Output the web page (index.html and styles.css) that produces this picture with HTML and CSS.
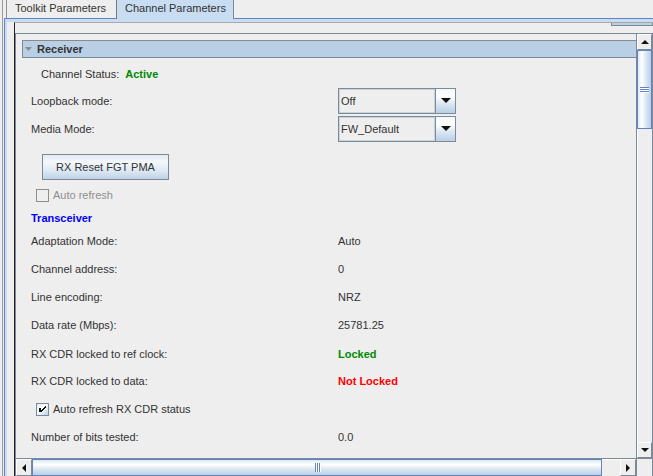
FILE: index.html
```html
<!DOCTYPE html>
<html>
<head>
<meta charset="utf-8">
<link rel="stylesheet" href="styles.css">
</head>
<body>
<div class="frame">
  <div class="tabs">
    <div class="tab">Toolkit Parameters</div>
    <div class="tab sel">Channel Parameters</div>
  </div>
  <div class="pane">
    <div class="pane-in">
      <div class="panel">
        <div class="strip"><span class="nub"></span></div>
        <div class="scroll">
          <div class="viewport">
            <div class="hdr">
              <svg class="tri" width="7" height="4" viewBox="0 0 7 4"><polygon points="0,0 7,0 3.5,4" fill="#8a8a8a"/></svg>
              <span>Receiver</span>
            </div>
            <div class="rows">
              <div class="status"><span>Channel Status:</span><b class="green">Active</b></div>
              <div class="crow first">
                <span>Loopback mode:</span>
                <div class="combo">
                  <div class="field">Off</div>
                  <div class="cbtn"><svg width="10" height="6" viewBox="0 0 10 6"><polygon points="0,0 10,0 5,5" fill="#111"/></svg></div>
                </div>
              </div>
              <div class="crow">
                <span>Media Mode:</span>
                <div class="combo">
                  <div class="field">FW_Default</div>
                  <div class="cbtn"><svg width="10" height="6" viewBox="0 0 10 6"><polygon points="0,0 10,0 5,5" fill="#111"/></svg></div>
                </div>
              </div>
              <div class="btnrow"><div class="btn">RX Reset FGT PMA</div></div>
              <div class="chkrow disabled"><span class="box"></span><span>Auto refresh</span></div>
              <div class="section">Transceiver</div>
              <div class="kv"><span>Adaptation Mode:</span><span>Auto</span></div>
              <div class="kv"><span>Channel address:</span><span>0</span></div>
              <div class="kv"><span>Line encoding:</span><span>NRZ</span></div>
              <div class="kv"><span>Data rate (Mbps):</span><span>25781.25</span></div>
              <div class="kv lower"><span>RX CDR locked to ref clock:</span><b class="green">Locked</b></div>
              <div class="kv"><span>RX CDR locked to data:</span><b class="red">Not Locked</b></div>
              <div class="kv chk"><span class="chkrow"><span class="box on"><svg width="11" height="11" viewBox="0 0 11 11" shape-rendering="crispEdges"><rect x="2" y="4" width="2" height="4" fill="#111"/><polygon points="4,6 8,2 9,2 9,3 5,7 5,8 4,8" fill="#111"/></svg></span><span>Auto refresh RX CDR status</span></span></div>
              <div class="kv"><span>Number of bits tested:</span><span>0.0</span></div>
            </div>
          </div>
          <div class="vbar">
            <div class="sbtn"><svg width="8" height="5" viewBox="0 0 8 5"><polygon points="4,0 8,4 0,4" fill="#111"/></svg></div>
            <div class="vthumb"><span class="grip"></span><span class="grip"></span><span class="grip"></span></div>
            <div class="vtrack"></div>
            <div class="sbtn"><svg width="8" height="5" viewBox="0 0 8 5"><polygon points="0,0 8,0 4,4" fill="#111"/></svg></div>
          </div>
          <div class="hbar">
            <div class="sbtn"><svg width="5" height="8" viewBox="0 0 5 8"><polygon points="0,4 4,0 4,8" fill="#111"/></svg></div>
            <div class="hthumb"><span class="vgrip"></span><span class="vgrip"></span><span class="vgrip"></span></div>
            <div class="htrack"></div>
            <div class="sbtn"><svg width="5" height="8" viewBox="0 0 5 8"><polygon points="0,0 4,4 0,8" fill="#111"/></svg></div>
          </div>
          <div class="corner"></div>
        </div>
      </div>
    </div>
  </div>
</div>
</body>
</html>
```
FILE: styles.css
```css
html, body {
  margin: 0;
  padding: 0;
  background: #eeeeee;
}
body {
  width: 653px;
  height: 476px;
  overflow: hidden;
  font-family: "Liberation Sans", Arial, sans-serif;
  font-size: 11px;
  color: #333333;
}
.frame {
  margin-left: 2px;
  border-left: 1px solid #9a9a9a;
  padding-left: 1px;
  height: 476px;
  display: flex;
  flex-direction: column;
}
.tabs {
  display: flex;
  height: 18px;
  padding-left: 2px;
  position: relative;
  z-index: 1;
}
.tab {
  box-sizing: border-box;
  width: 111px;
  height: 18px;
  border-left: 1px solid #8e8f8f;
  border-right: 1px solid #8e8f8f;
  padding-left: 8px;
  line-height: 17px;
  white-space: nowrap;
}
.tab.sel {
  width: 118px;
  height: 19px;
  margin-left: -1px;
  background: #c8ddf2;
  border-left-color: #6f7a86;
  border-right-color: #7a8a99;
}
.pane {
  flex: 1;
  min-height: 0;
  display: flex;
  flex-direction: column;
  border-top: 1px solid #6382bf;
  border-left: 1px solid #6382bf;
  background: #c8ddf2;
  padding: 3px 0 0 2px;
}
.pane-in {
  flex: 1;
  min-height: 0;
  background: #eeeeee;
  padding-left: 7px;
  display: flex;
  flex-direction: column;
}
.panel {
  flex: 1;
  min-height: 0;
  border-left: 1px solid #222222;
  border-top: 1px solid #a9a9a9;
  display: flex;
  flex-direction: column;
}
.strip {
  height: 10px;
  display: flex;
  justify-content: flex-end;
}
.nub {
  width: 40px;
  height: 2px;
  border: 1px solid #7a8a99;
  border-top: none;
  background: #b8cfe5;
}
.scroll {
  flex: 1;
  min-height: 0;
  display: grid;
  grid-template-columns: 1fr 16px;
  grid-template-rows: 1fr 18px;
  border-top: 1px solid #7a8a99;
  border-left: 1px solid #7a8a99;
  border-right: 1px solid #7a8a99;
}
.viewport {
  overflow: hidden;
  padding-top: 6px;
}
.hdr {
  margin-left: 6px;
  height: 16px;
  border: 1px solid #7a8a99;
  border-top-color: #8a8a8a;
  border-right: none;
  background: #b8cfe5;
  display: flex;
  align-items: center;
  padding-left: 2px;
  font-weight: bold;
  color: #333;
}
.hdr .tri {
  margin-right: 5px;
  margin-top: -1px;
}
.rows {
  padding-left: 15px;
}
.status {
  margin-top: 6px;
  height: 20px;
  display: flex;
  align-items: center;
  padding-left: 10px;
  gap: 6px;
}
.green { color: #008a00; }
.red { color: #ff0000; }
.crow {
  margin-top: 2px;
  height: 26px;
  display: grid;
  grid-template-columns: 307px 118px;
  align-items: center;
}
.crow.first { margin-top: 4px; }
.combo {
  box-sizing: border-box;
  height: 26px;
  display: flex;
  border: 1px solid #7a8a99;
}
.field {
  flex: 1;
  border: 1px solid #c9d3dd;
  padding-left: 1px;
  display: flex;
  align-items: center;
  background: #eeeeee;
}
.cbtn {
  width: 19px;
  border-left: 1px solid #7a8a99;
  background: linear-gradient(to bottom, #f4f8fc 0%, #ffffff 30%, #dde8f3 60%, #b8cfe5 100%);
  display: flex;
  align-items: center;
  justify-content: center;
}
.btnrow {
  margin-top: 12px;
  padding-left: 11px;
}
.btn {
  box-sizing: border-box;
  width: 127px;
  height: 26px;
  border: 1px solid #7a8a99;
  background: linear-gradient(to bottom, #e4ebf3 0%, #f4f7fa 30%, #dde8f3 65%, #bfd3e8 100%);
  display: flex;
  align-items: center;
  justify-content: center;
}
.chkrow {
  margin-top: 6px;
  height: 18px;
  display: flex;
  align-items: center;
  padding-left: 5px;
  gap: 4px;
}
.box {
  box-sizing: border-box;
  width: 13px;
  height: 13px;
  border: 1px solid #7a8a99;
  background: linear-gradient(135deg, #dde8f3 0%, #ffffff 40%, #b8cfe5 100%);
  display: flex;
  align-items: center;
  justify-content: center;
}
.disabled { color: #8e8e8e; }
.disabled .box {
  border-color: #8e8e8e;
  background: #eeeeee;
}
.section {
  margin-top: 4px;
  height: 19px;
  display: flex;
  align-items: center;
  font-weight: bold;
  color: #0000ff;
}
.kv {
  height: 28px;
  display: grid;
  grid-template-columns: 307px 1fr;
  align-items: center;
}
.kv.lower { padding-top: 2px; height: 26px; }
.kv.chk { display: flex; }
.kv.chk .chkrow { margin-top: 0; }
.vbar {
  border-left: 1px solid #7a8a99;
  display: flex;
  flex-direction: column;
}
.sbtn {
  box-sizing: border-box;
  width: 16px;
  height: 16px;
  flex: none;
  background: #eeeeee;
  border: 1px solid #ffffff;
  border-right-color: #7a8a99;
  border-bottom-color: #7a8a99;
  display: flex;
  align-items: center;
  justify-content: center;
}
.vbar .sbtn { width: 15px; }
.vthumb {
  box-sizing: border-box;
  height: 79px;
  flex: none;
  border: 1px solid #6382bf;
  background: linear-gradient(to right, #dde8f3 0%, #ffffff 30%, #dde8f3 60%, #b8cfe5 100%);
  display: flex;
  flex-direction: column;
  align-items: center;
  justify-content: center;
  gap: 1px;
}
.grip {
  width: 9px;
  height: 1px;
  background: #6382bf;
  box-shadow: 0 1px 0 #ffffff;
}
.vtrack {
  flex: 1;
  border-left: 1px solid #ffffff;
}
.hbar {
  border-top: 1px solid #7a8a99;
  display: flex;
}
.hbar .sbtn { height: 17px; }
.hthumb {
  box-sizing: border-box;
  width: 570px;
  flex: none;
  border: 1px solid #6382bf;
  background: linear-gradient(to bottom, #dde8f3 0%, #ffffff 30%, #dde8f3 60%, #b8cfe5 100%);
  display: flex;
  align-items: center;
  justify-content: center;
  gap: 1px;
}
.vgrip {
  width: 1px;
  height: 9px;
  background: #6382bf;
  box-shadow: 1px 0 0 #ffffff;
}
.htrack {
  flex: 1;
  border-top: 1px solid #ffffff;
}
.corner {
  border-top: 1px solid #7a8a99;
  border-left: 1px solid #7a8a99;
  background: #eeeeee;
}
```
